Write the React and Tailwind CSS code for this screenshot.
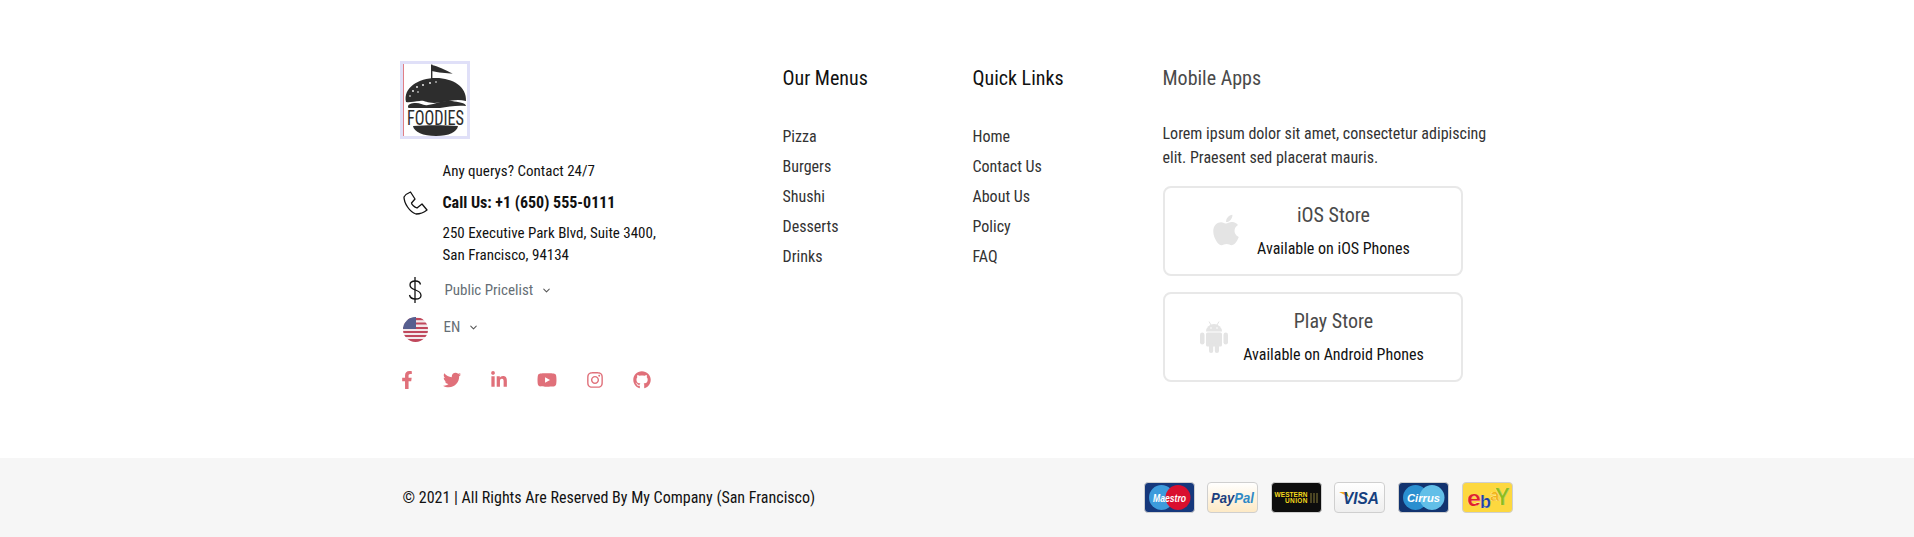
import React from 'react';
import { ChevronDown } from 'lucide-react';
import { FaFacebookF, FaTwitter, FaLinkedinIn, FaYoutube, FaInstagram, FaGithub, FaApple } from 'react-icons/fa';

const menus = ['Pizza', 'Burgers', 'Shushi', 'Desserts', 'Drinks'];
const links = ['Home', 'Contact Us', 'About Us', 'Policy', 'FAQ'];

function BurgerLogo() {
    return (
        <svg width="64" height="72" viewBox="0 0 64 72" className="block">
            <rect x="0" y="0" width="1" height="72" fill="#e07f86" />
            <path d="M28.700 0.500v16" stroke="#2d2d2d" strokeWidth="1.400" />
            <path d="M28.700 1c6 1 13 5 21 8.500c-6 0-15-1-21-2.500z" fill="#2d2d2d" />
            <path d="M3 38C0 24 15 14 33 14c17 0 31 9 30 23c-12-3-22 2-32 2c-8 0-10-3-14-2c-6 0-10 2-14 1z" fill="#2d2d2d" />
            <path d="M5 43c0-3 3-4 8-4c5 0 7 3 12 2c8-1 15-5 24-4c6 1 14 2 14 5c-10-1-18 1-26 2H8c-2 0-3 0-3-1z" fill="#2d2d2d" />
            <g fill="#fff">
                <circle cx="10" cy="27" r="0.900" /><circle cx="14" cy="23" r="0.900" /><circle cx="20" cy="21" r="0.900" /><circle cx="27" cy="19" r="0.900" /><circle cx="33" cy="18" r="0.800" /><circle cx="7" cy="32" r="0.800" /><circle cx="15" cy="28" r="0.800" />
            </g>
            <text x="4" y="60.500" fontFamily="Roboto, sans-serif" fontSize="21" fill="#2d2d2d" textLength="57" lengthAdjust="spacingAndGlyphs">FOODIES</text>
            <path d="M10 62c12-1 32-1 45 0c-1 6-9 10-22 10s-22-4-23-10z" fill="#2d2d2d" />
        </svg>
    );
}

function PhoneIcon() {
    return (
        <svg width="26" height="26" viewBox="0 0 26 26" fill="none" stroke="#111" strokeWidth="1.300" strokeLinejoin="round">
            <path d="M7.500 2C5 3 2.500 4.500 1 7c0 6 5.500 15 12 17c4.500 0 8-1.500 11-4l-5-6l-5 4c-2.500-1-5.500-3.500-5.500-5l3.500-4z" />
        </svg>
    );
}

function DollarIcon() {
    return (
        <svg width="24" height="28" viewBox="0 0 24 28" fill="none" stroke="#111" strokeWidth="1.300">
            <path d="M12 1v26" />
            <path d="M17.500 8.500C17 6 15 5 12.500 5C9.500 5 7 6.500 7 9c0 3 2.500 4 5.500 5c3 1 5.500 2 5.500 5.500c0 2.500-2.500 3.500-5.500 3.500c-3 0-5.500-1.500-6-4" />
        </svg>
    );
}

function AndroidIcon() {
    return (
        <svg width="28" height="32" viewBox="0 0 28 32" fill="currentColor">
            <path d="M9 0.500l2 3.500M19 0.500l-2 3.500" stroke="currentColor" strokeWidth="1" />
            <path d="M6 10.500a8 7.500 0 0 1 16 0z" />
            <rect x="6" y="11.500" width="16" height="14" rx="1.500" />
            <rect x="0" y="11.500" width="4.500" height="12" rx="2.250" />
            <rect x="23.500" y="11.500" width="4.500" height="12" rx="2.250" />
            <rect x="9" y="22" width="4.200" height="10" rx="2.100" />
            <rect x="14.800" y="22" width="4.200" height="10" rx="2.100" />
            <circle cx="11" cy="7" r="0.800" fill="#fff" />
            <circle cx="17" cy="7" r="0.800" fill="#fff" />
        </svg>
    );
}

function FlagIcon() {
    return (
        <svg width="25" height="25" viewBox="0 0 25 25" className="rounded-full">
            <rect width="25" height="25" fill="#f3e9ea" />
            <g fill="#c0485c">
                <rect y="1" width="25" height="2.200" /><rect y="5.500" width="25" height="2" /><rect y="10" width="25" height="2" /><rect y="14" width="25" height="2" /><rect y="18" width="25" height="2" /><rect y="22" width="25" height="3" />
            </g>
            <rect width="13" height="12" fill="#565f8f" />
        </svg>
    );
}

function Dropdown({ label, className }) {
    return (
        <span className={`flex items-center text-[15px] leading-6 text-[#666e75] ${className}`}>
            {label}
            <ChevronDown size={11} strokeWidth={2.2} color="#555" className="ml-2" />
        </span>
    );
}

function StoreButton({ icon, iconClass, title, sub }) {
    return (
        <div className="h-[90px] w-[300px] rounded-lg border-2 border-[#e8e8e8] flex items-center">
            <div className={`w-[74px] flex text-[#e4e4e4] ${iconClass}`}>{icon}</div>
            <div className="w-[190px] pt-[2px] text-center">
                <div className="text-[20px] leading-6 text-[#4a4a4a]">{title}</div>
                <div className="mt-[10px] text-[16px] leading-6 text-[#111]">{sub}</div>
            </div>
        </div>
    );
}

function CardFrame({ bg, children }) {
    return (
        <svg width="51" height="31" viewBox="0 0 51 31" className="block">
            <defs>
                <linearGradient id="ppg" x1="0" y1="0" x2="0" y2="1">
                    <stop offset="0" stopColor="#ffffff" />
                    <stop offset="1" stopColor="#fde9c4" />
                </linearGradient>
                <linearGradient id="vsg" x1="0" y1="0" x2="0" y2="1">
                    <stop offset="0" stopColor="#ffffff" />
                    <stop offset="1" stopColor="#eeeeee" />
                </linearGradient>
            </defs>
            <rect x="0.500" y="0.500" width="50" height="30" rx="3.500" fill={bg} stroke="#cfcfcf" />
            {children}
        </svg>
    );
}

const cardText = { fontFamily: 'Liberation Sans, sans-serif', fontWeight: 700, fontStyle: 'italic' };
const wuText = { ...cardText, fontStyle: 'normal' };

function PaymentCards() {
    return (
        <div className="flex gap-[12.6px]">
            <CardFrame bg="#16387c">
                <circle cx="17.500" cy="15.500" r="12.500" fill="#3d9bdc" />
                <circle cx="34" cy="15.500" r="12.500" fill="#d9102e" />
                <text x="25.500" y="19.500" textAnchor="middle" fontSize="11" fill="#fff" style={cardText} textLength="33" lengthAdjust="spacingAndGlyphs">Maestro</text>
            </CardFrame>
            <CardFrame bg="url(#ppg)">
                <text x="4" y="20.500" fontSize="14" style={cardText} textLength="43" lengthAdjust="spacingAndGlyphs">
                    <tspan fill="#1c3f80">Pay</tspan><tspan fill="#2f8ac6">Pal</tspan>
                </text>
            </CardFrame>
            <CardFrame bg="#0d0d0d">
                <text x="3.500" y="14.500" fontSize="6.500" fill="#f4d81c" style={wuText} textLength="33" lengthAdjust="spacing">WESTERN</text>
                <text x="14" y="21" fontSize="6.500" fill="#f4d81c" style={wuText} textLength="22.500" lengthAdjust="spacing">UNION</text>
                <path d="M40 11v10M43 11v10M46 11v10" stroke="#8a7f3a" strokeWidth="1" />
            </CardFrame>
            <CardFrame bg="url(#vsg)">
                <path d="M5 10h8l2 5z" fill="#f0a81c" />
                <text x="9" y="21.500" fontSize="16" fill="#16407f" style={cardText} textLength="36" lengthAdjust="spacingAndGlyphs">VISA</text>
            </CardFrame>
            <CardFrame bg="#12336f">
                <circle cx="17.500" cy="15.500" r="12.500" fill="#2a8fd0" />
                <circle cx="34" cy="15.500" r="12.500" fill="#62bfe8" />
                <text x="25.500" y="19.500" textAnchor="middle" fontSize="11" fill="#fff" style={cardText} textLength="33" lengthAdjust="spacingAndGlyphs">Cirrus</text>
            </CardFrame>
            <CardFrame bg="#fdd83f">
                <g style={{ fontFamily: 'Liberation Sans, sans-serif', fontWeight: 700 }} stroke="#fff" strokeWidth="0.200">
                    <text x="28" y="19" fontSize="17" fill="#f2b21b">a</text>
                    <text x="33" y="23" fontSize="24" fill="#8ebc1d" textLength="15" lengthAdjust="spacingAndGlyphs">Y</text>
                    <text x="5" y="24" fontSize="22" fill="#e0222c" textLength="14" lengthAdjust="spacingAndGlyphs">e</text>
                    <text x="18" y="26" fontSize="18" fill="#1d3f9f" textLength="11" lengthAdjust="spacingAndGlyphs">b</text>
                </g>
            </CardFrame>
        </div>
    );
}

function LinkColumn({ title, items }) {
    return (
        <div className="w-[190px]">
            <h4 className="text-[20px] leading-6 text-[#111]">{title}</h4>
            <ul className="mt-[32px] flex flex-col">
                {items.map((item) => (
                    <li key={item} className="h-[30px] text-[16px] leading-[30px] text-[#333]">{item}</li>
                ))}
            </ul>
        </div>
    );
}

export default function App() {
    return (
        <div className="bg-white font-['Roboto',sans-serif] [font-stretch:75%]">
            <div className="w-[1110px] ml-[402.5px] h-[458px] flex">
                <div className="w-[380px] pt-[61px]">
                    <div className="w-[70px] ml-[-3px] border-[3px] border-[#e0e0f8]">
                        <BurgerLogo />
                    </div>
                    <div className="mt-5 pl-[40px] text-[15px] leading-6 text-[#111]">Any querys? Contact 24/7</div>
                    <div className="mt-2 flex items-center h-6">
                        <PhoneIcon />
                        <span className="ml-[14px] text-[16px] font-bold text-[#111]">Call Us: +1 (650) 555-0111</span>
                    </div>
                    <div className="mt-[7px] pl-[40px] text-[15px] leading-[22px] text-[#111]">
                        250 Executive Park Blvd, Suite 3400,<br />San Francisco, 94134
                    </div>
                    <div className="mt-[10px] flex items-center h-7">
                        <DollarIcon />
                        <Dropdown label="Public Pricelist" className="ml-[18px]" />
                    </div>
                    <div className="mt-3 flex items-center h-[26px]">
                        <FlagIcon />
                        <Dropdown label="EN" className="ml-4 mb-1" />
                    </div>
                    <div className="mt-[28px] flex items-center text-[#e0707a] text-[18px]">
                        <FaFacebookF className="ml-[-4.5px]" />
                        <FaTwitter className="ml-[27px]" />
                        <FaLinkedinIn className="ml-[28.5px]" />
                        <FaYoutube className="ml-[29px] text-[20px]" />
                        <FaInstagram className="ml-[29px]" />
                        <FaGithub className="ml-[29px]" />
                    </div>
                </div>
                <div className="flex pt-[66px]">
                    <LinkColumn title="Our Menus" items={menus} />
                    <LinkColumn title="Quick Links" items={links} />
                    <div className="w-[350px]">
                        <h4 className="text-[20px] leading-6 text-[#4a4a4a]">Mobile Apps</h4>
                        <p className="mt-[32px] text-[16px] leading-6 text-[#333]">
                            Lorem ipsum dolor sit amet, consectetur adipiscing<br />elit. Praesent sed placerat mauris.
                        </p>
                        <div className="mt-[16px] flex flex-col gap-[16px]">
                            <StoreButton icon={<FaApple size={40} className="mt-[-2px]" />} iconClass="pl-[48px]" title="iOS Store" sub="Available on iOS Phones" />
                            <StoreButton icon={<AndroidIcon />} iconClass="pl-[35px]" title="Play Store" sub="Available on Android Phones" />
                        </div>
                    </div>
                </div>
            </div>
            <div className="h-[79px] bg-[#f6f6f6]">
                <div className="w-[1110px] ml-[402.5px] h-full flex items-center justify-between">
                    <span className="text-[16px] text-[#111]">© 2021 | All Rights Are Reserved By My Company (San Francisco)</span>
                    <PaymentCards />
                </div>
            </div>
        </div>
    );
}
